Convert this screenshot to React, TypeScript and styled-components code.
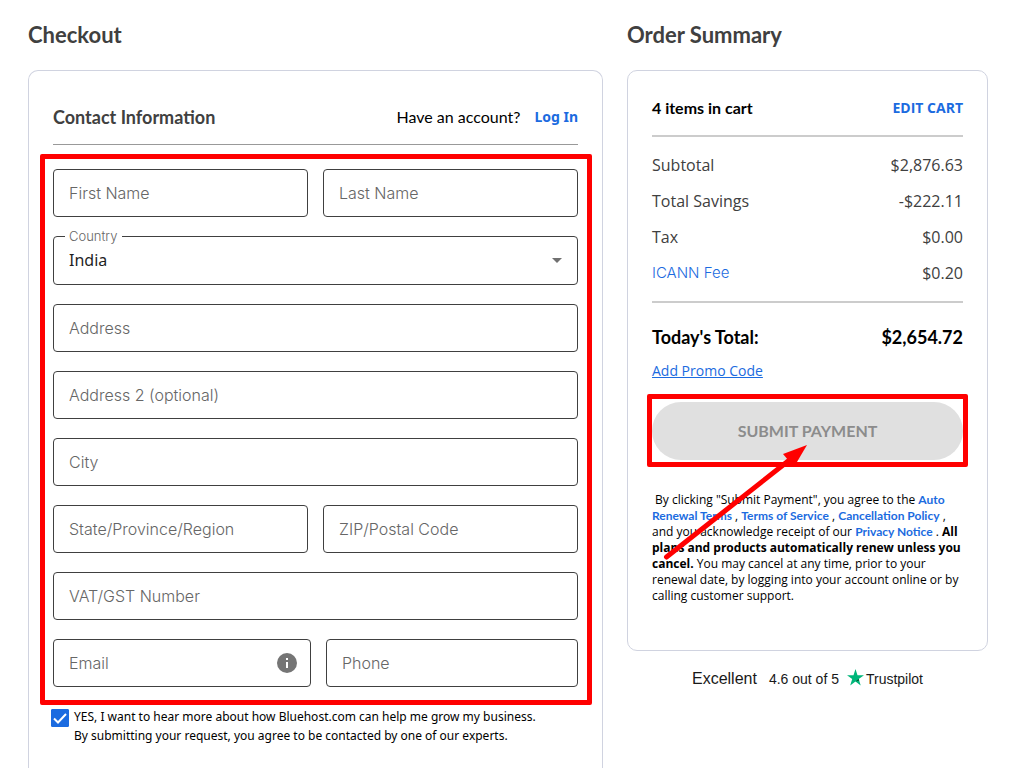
import React from "react";
import styled, { createGlobalStyle } from "styled-components";

const heading = `Lato, "Open Sans", sans-serif`;
const text = `"Open Sans", "Noto Sans", sans-serif`;
const wideText = `"Noto Sans", "Open Sans", sans-serif`;
const blue = "#1b6be0";
const red = "#ff0000";

const GlobalStyle = createGlobalStyle`
  * { box-sizing: border-box; }
  body { margin: 0; background: #fff; color: #000; font-family: ${text}; }
  h1, h2, p { margin: 0; }
  input, select, button { font: inherit; }
`;

const Page = styled.div`
  display: grid;
  grid-template-columns: 575fr 361fr;
  gap: 24px;
  min-height: 100vh;
  padding: 0 27px 0 28px;
`;

const Column = styled.section`
  display: flex;
  flex-direction: column;
  min-width: 0;
`;

const PageTitle = styled.h1`
  height: 70px;
  font: 700 22px/70px ${heading};
  color: #404040;
`;

const Card = styled.div<{ $open?: boolean }>`
  border: 1px solid #d0d3e0;
  border-radius: ${(p) => (p.$open ? "10px 10px 0 0" : "10px")};
  border-bottom-width: ${(p) => (p.$open ? 0 : 1)}px;
  flex: ${(p) => (p.$open ? "1" : "none")};
  padding: 0 24px ${(p) => (p.$open ? 20 : 42)}px;
`;

const ContactHeader = styled.header`
  display: flex;
  align-items: center;
  justify-content: space-between;
  height: 74px;
  padding-top: 18px;
  border-bottom: 1px solid #999;
`;

const ContactTitle = styled.h2`
  font: 700 18px/24px ${heading};
  color: #404040;
`;

const Account = styled.p`
  display: flex;
  align-items: center;
  gap: 14px;
  font: 400 16px/24px ${heading};
`;

const LogIn = styled.a`
  font: 700 14px/24px ${wideText};
  color: ${blue};
  text-decoration: none;
`;

const Fields = styled.div`
  display: flex;
  flex-direction: column;
  gap: 19px;
  margin: 9px -14px 0 -13px;
  padding: 10px 9px 13px 8px;
  border: 5px solid ${red};
  border-radius: 2px;
`;

const FieldRow = styled.div<{ $columns?: string }>`
  display: grid;
  grid-template-columns: ${(p) => p.$columns ?? "1fr 1fr"};
  gap: 15px;
`;

const Field = styled.div`
  position: relative;
  display: flex;
  min-width: 0;
`;

const TextInput = styled.input`
  width: 100%;
  height: 48px;
  padding: 0 15px;
  border: 1px solid #404040;
  border-radius: 4px;
  outline: none;
  background: #fff;
  font: 300 16px/20px Inter, sans-serif;
  color: #1f1f1f;
  &::placeholder { color: #666; opacity: 1; }
`;

const CountrySelect = styled.select`
  width: 100%;
  height: 49px;
  padding: 0 15px 2px;
  appearance: none;
  border: 1px solid #404040;
  border-radius: 4px;
  outline: none;
  background: #fff;
  font: 400 16px/22px ${wideText};
  color: #1f1f1f;
`;

const FloatingLabel = styled.label`
  position: absolute;
  top: -8px;
  left: 12px;
  padding: 0 5px 0 4px;
  background: #fff;
  font: 300 13px/16px Inter, sans-serif;
  color: #666;
`;

const Caret = styled.svg`
  position: absolute;
  top: 22px;
  right: 16px;
  pointer-events: none;
`;

const InfoButton = styled.button`
  position: absolute;
  top: 14px;
  right: 14px;
  display: flex;
  padding: 0;
  border: 0;
  background: none;
`;

const OptIn = styled.div`
  display: flex;
  gap: 5px;
  margin: 2px 0 0 -2px;
  font: 400 12px/19px ${wideText};
`;

const Check = styled.span`
  display: grid;
  flex: none;
  height: 18px;
  margin-top: 2px;
  > * { grid-area: 1 / 1; }
  svg { pointer-events: none; }
`;

const CheckInput = styled.input`
  appearance: none;
  width: 18px;
  height: 18px;
  margin: 0;
  border: 1px solid ${blue};
  border-radius: 1px;
  &:checked { background: ${blue}; }
`;

const CartHeader = styled.header`
  display: flex;
  align-items: center;
  justify-content: space-between;
  height: 66px;
  padding-top: 10px;
  border-bottom: 2px solid #ccc;
`;

const CartCount = styled.h2`
  font: 700 16px/24px ${heading};
`;

const EditCart = styled.a`
  font: 700 14px/24px ${text};
  color: ${blue};
  text-decoration: none;
`;

const Amounts = styled.dl`
  margin: 0;
  padding: 10px 0;
  border-bottom: 2px solid #ccc;
`;

const Amount = styled.div`
  display: flex;
  justify-content: space-between;
  font: 400 16px/36px ${text};
  color: #404040;
  dd { margin: 0; }
`;

const FeeLink = styled.a`
  display: block;
  font: 300 15px/36px Inter, sans-serif;
  color: ${blue};
  text-decoration: none;
`;

const Total = styled.p`
  display: flex;
  justify-content: space-between;
  margin-top: 20px;
  font: 700 18px/28px ${heading};
`;

const PromoLink = styled.a`
  display: block;
  width: fit-content;
  margin-top: 8px;
  font: 400 14px/24px ${text};
  color: ${blue};
`;

const SubmitArea = styled.div`
  position: relative;
  margin: 11px -5px 0;
  padding: 3px 0 2px;
  border: 5px solid ${red};
  border-radius: 2px;
`;

const SubmitButton = styled.button`
  display: block;
  width: 100%;
  height: 58px;
  border: 0;
  border-radius: 29px;
  background: #e0e0e0;
  font: 700 16px/24px ${heading};
  color: #8c8c8c;
`;

const Arrow = styled.svg`
  position: absolute;
  top: 45px;
  left: 10px;
  pointer-events: none;
`;

const Legal = styled.p`
  margin-top: 25px;
  padding-bottom: 4px;
  font: 400 12px/16px ${text};
  a {
    font-family: ${heading};
    font-weight: 700;
    color: ${blue};
    text-decoration: none;
  }
`;

const Trust = styled.div`
  display: flex;
  align-items: center;
  justify-content: center;
  margin-top: 16px;
  font: 400 14px/24px "Liberation Sans", sans-serif;
  color: #191919;
`;

const Rating = styled.span`
  margin-right: 12px;
  font-size: 16px;
`;

const TrustLink = styled.a`
  display: flex;
  align-items: center;
  gap: 2px;
  margin-left: 8px;
  color: #191919;
  text-decoration: none;
  svg { margin-bottom: 4px; }
`;

const TextField = ({ label, type = "text" }: { label: string; type?: string }) => (
  <Field>
    <TextInput type={type} placeholder={label} aria-label={label} />
  </Field>
);

const amounts = [
  ["Subtotal", "$2,876.63"],
  ["Total Savings", "-$222.11"],
  ["Tax", "$0.00"],
];

export default function App() {
  return (
    <>
      <GlobalStyle />
      <Page>
        <Column>
          <PageTitle>Checkout</PageTitle>
          <Card $open>
            <ContactHeader>
              <ContactTitle>Contact Information</ContactTitle>
              <Account>
                Have an account? <LogIn href="#login">Log In</LogIn>
              </Account>
            </ContactHeader>
            <Fields>
              <FieldRow>
                <TextField label="First Name" />
                <TextField label="Last Name" />
              </FieldRow>
              <Field>
                <CountrySelect id="country" defaultValue="India">
                  <option>India</option>
                </CountrySelect>
                <FloatingLabel htmlFor="country">Country</FloatingLabel>
                <Caret width="10" height="5" viewBox="0 0 10 5" aria-hidden="true">
                  <path d="M0 0h10L5 5z" fill="#707070" />
                </Caret>
              </Field>
              <TextField label="Address" />
              <TextField label="Address 2 (optional)" />
              <TextField label="City" />
              <FieldRow>
                <TextField label="State/Province/Region" />
                <TextField label="ZIP/Postal Code" />
              </FieldRow>
              <TextField label="VAT/GST Number" />
              <FieldRow $columns="258fr 252fr">
                <Field>
                  <TextInput type="email" placeholder="Email" aria-label="Email" />
                  <InfoButton type="button" aria-label="About your email">
                    <svg width="20" height="20" viewBox="0 0 20 20" aria-hidden="true">
                      <circle cx="10" cy="10" r="10" fill="#757575" />
                      <path d="M9 5h2v2H9zM9 9h2v6H9z" fill="#fff" />
                    </svg>
                  </InfoButton>
                </Field>
                <TextField label="Phone" type="tel" />
              </FieldRow>
            </Fields>
            <OptIn>
              <Check>
                <CheckInput type="checkbox" id="optin" defaultChecked />
                <svg width="18" height="18" viewBox="0 0 18 18" aria-hidden="true">
                  <path d="M3 9.5l4 4 8-8.5" fill="none" stroke="#fff" strokeWidth="2" />
                </svg>
              </Check>
              <label htmlFor="optin">
                YES, I want to hear more about how Bluehost.com can help me grow my business.
                <br />
                By submitting your request, you agree to be contacted by one of our experts.
              </label>
            </OptIn>
          </Card>
        </Column>

        <Column>
          <PageTitle as="h2">Order Summary</PageTitle>
          <Card>
            <CartHeader>
              <CartCount>4 items in cart</CartCount>
              <EditCart href="#cart">EDIT CART</EditCart>
            </CartHeader>
            <Amounts>
              {amounts.map(([name, value]) => (
                <Amount key={name}>
                  <dt>{name}</dt>
                  <dd>{value}</dd>
                </Amount>
              ))}
              <Amount>
                <dt><FeeLink href="#icann">ICANN Fee</FeeLink></dt>
                <dd>$0.20</dd>
              </Amount>
            </Amounts>
            <Total>
              <span>Today's Total:</span>
              <span>$2,654.72</span>
            </Total>
            <PromoLink href="#promo">Add Promo Code</PromoLink>
            <SubmitArea>
              <SubmitButton type="button">SUBMIT PAYMENT</SubmitButton>
              <Arrow width="152" height="120" viewBox="0 0 152 120" aria-hidden="true">
                <path d="M4.500 113L130 14" stroke={red} strokeWidth="5" strokeLinecap="round" />
                <path d="M145 1L121 10L132 23z" fill={red} />
              </Arrow>
            </SubmitArea>
            <Legal>
              &nbsp;By clicking "Submit Payment", you agree to the <a href="#renewal">Auto Renewal Terms</a> ,{" "}
              <a href="#terms">Terms of Service</a> , <a href="#cancel">Cancellation Policy</a> , and you
              acknowledge receipt of our <a href="#privacy">Privacy Notice</a> . <b>All plans and products
              automatically renew unless you cancel.</b> You may cancel at any time, prior to your renewal
              date, by logging into your account online or by calling customer support.
            </Legal>
          </Card>
          <Trust>
            <Rating>Excellent</Rating>
            <span>4.6 out of 5</span>
            <TrustLink href="#trustpilot">
              <svg width="17" height="17" viewBox="0 0 17 17" aria-hidden="true">
                <path d="M8.500 0l2 6.200H17l-5.300 3.900 2 6.400-5.200-3.900-5.300 3.900 2-6.400L0 6.200h6.500z" fill="#00b67a" />
                <path d="M12.200 11.500l-3.700 1.100 3.200-2.500z" fill="#005128" />
              </svg>
              Trustpilot
            </TrustLink>
          </Trust>
        </Column>
      </Page>
    </>
  );
}
